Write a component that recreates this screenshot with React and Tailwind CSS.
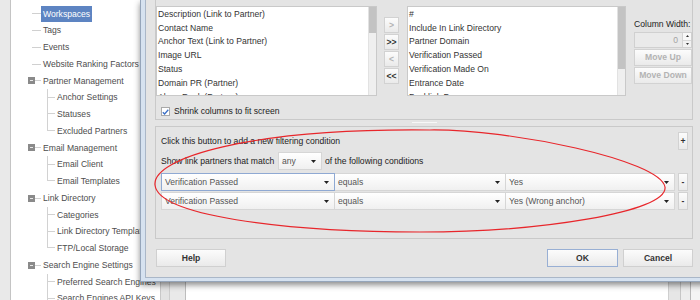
const tree = [
  { label: "Workspaces", lvl: 1, selected: true },
  { label: "Tags", lvl: 1 },
  { label: "Events", lvl: 1 },
  { label: "Website Ranking Factors", lvl: 1 },
  { label: "Partner Management", lvl: 1, group: true },
  { label: "Anchor Settings", lvl: 2 },
  { label: "Statuses", lvl: 2 },
  { label: "Excluded Partners", lvl: 2, last: true },
  { label: "Email Management", lvl: 1, group: true },
  { label: "Email Client", lvl: 2 },
  { label: "Email Templates", lvl: 2, last: true },
  { label: "Link Directory", lvl: 1, group: true },
  { label: "Categories", lvl: 2 },
  { label: "Link Directory Templates", lvl: 2 },
  { label: "FTP/Local Storage", lvl: 2, last: true },
  { label: "Search Engine Settings", lvl: 1, group: true },
  { label: "Preferred Search Engines", lvl: 2 },
  { label: "Search Engines API Keys", lvl: 2 },
];

const available = [
  "Description (Link to Partner)",
  "Contact Name",
  "Anchor Text (Link to Partner)",
  "Image URL",
  "Status",
  "Domain PR (Partner)",
  "Alexa Rank (Partner)",
];

const shown = [
  "#",
  "Include In Link Directory",
  "Partner Domain",
  "Verification Passed",
  "Verification Made On",
  "Entrance Date",
  "Backlink Page",
];

function TreeRow({ item }) {
  const label = (
    <span
      className={`h-full flex items-center px-[2px] whitespace-nowrap ${
        item.selected ? "bg-[#5d84c2] text-white" : ""
      }`}
    >
      {item.label}
    </span>
  );

  if (item.group) {
    return (
      <div className="flex items-center h-[16.76px]">
        <div className="w-[17px]" />
        <div className="w-[7px] h-[7px] bg-[#8a8a8a] flex items-center justify-center">
          <div className="w-[3px] h-px bg-[#e8e8e8]" />
        </div>
        <div className="w-[6px] h-px bg-[#d0d0d0]" />
        {label}
      </div>
    );
  }

  if (item.lvl === 2) {
    return (
      <div className="flex items-center h-[16.76px]">
        <div className="w-[36px]" />
        <div className="w-[8px] h-full flex flex-col">
          <div className="h-1/2 border-l border-b border-[#d2d2d2]" />
          <div className={`flex-1 ${item.last ? "" : "border-l border-[#d2d2d2]"}`} />
        </div>
        {label}
      </div>
    );
  }

  return (
    <div className="flex items-center h-[16.76px]">
      <div className="w-[21px]" />
      <div className="w-[9px] h-px bg-[#d0d0d0]" />
      {label}
    </div>
  );
}

function Caret() {
  return (
    <svg width="5" height="3" viewBox="0 0 5 3" className="shrink-0">
      <path d="M0 0H5L2.5 3Z" fill="#222" />
    </svg>
  );
}

function Combo({ text, className }) {
  return (
    <div
      className={`flex items-center justify-between h-[18px] pl-[3px] pr-[5px] bg-linear-to-b from-white to-[#f0f0f0] text-[#555] ${className}`}
    >
      <span className="whitespace-nowrap">{text}</span>
      <Caret />
    </div>
  );
}

function Btn({ children, className, muted }) {
  return (
    <div
      className={`flex items-center justify-center font-bold bg-linear-to-b from-[#fcfcfc] to-[#eaeaea] ${
        muted ? "text-[#b3b3b3]" : "text-[#333]"
      } ${className}`}
    >
      {children}
    </div>
  );
}

function ListBox({ items, className, thumb }) {
  return (
    <div className={`h-[90px] flex border border-[#c9c9c9] bg-white overflow-hidden ${className}`}>
      <div className="flex-1 pl-[1px] text-[#333]">
        {items.map((t) => (
          <div key={t} className="h-[13.9px] flex items-center whitespace-nowrap">
            {t}
          </div>
        ))}
      </div>
      <div className="w-[8px] bg-[#efefef] border-l border-[#e2e2e2]">
        <div className={`bg-[#c3c3c3] ${thumb}`} />
      </div>
    </div>
  );
}

export default function App() {
  return (
    <div className="relative w-[700px] h-[300px] overflow-hidden bg-[#e6e6e6] font-['Liberation_Sans',Arial,sans-serif] text-[8.6px] leading-none text-[#333]">
      {/* application behind the dialog */}
      <div className="flex h-full">
        <div className="w-[11px] bg-[#e9e9e9] border-r border-[#c4c4c4]" />
        <div className="w-[149px] bg-white pt-[5.6px] text-[#4d4d4d]">
          {tree.map((item) => (
            <TreeRow key={item.label} item={item} />
          ))}
        </div>
        <div className="w-[26px] flex bg-[#e3e3e3] border-l border-[#c8c8c8]">
          <div className="w-[9px] border-r border-[#cdcdcd]" />
          <div className="flex-1 border-r border-[#bdbdbd] bg-[#e9e9e9]" />
        </div>
        <div className="w-[482px] bg-white" />
        <div className="flex-1 flex bg-[#e6e6e6] border-l border-[#cfcfcf]">
          <div className="w-[12px] border-r border-[#c6c6c6]" />
          <div className="w-[10px] border-r border-[#b8b8b8] bg-[#ededed]" />
          <div className="flex-1 bg-[#f4f4f4]" />
        </div>
      </div>

      {/* dialog window */}
      <div className="absolute left-[140px] top-0 w-[570px] h-[282px] bg-[#d6e2f0] border-l border-b border-[#95a5ba] pl-[4px] pb-[3px] shadow-[0_3px_6px_rgba(0,0,0,0.45)]">
        <div className="h-full bg-[#e4e4e4] border-l border-b border-[#aab7c8] pl-[9px]">
          <div className="w-[538px]">
            {/* column chooser */}
            <div className="h-[120px] border-x border-b border-[#c9c9c9] pt-[6px]">
              <div className="flex items-start">
                <ListBox items={available} className="w-[221px]" thumb="h-[26px]" />
                <div className="ml-[7px] mt-[11px] w-[15px] flex flex-col gap-[1px]">
                  <Btn muted className="h-[16px] border border-[#d2d2d2]">&gt;</Btn>
                  <Btn className="h-[16px] border border-[#d2d2d2]">&gt;&gt;</Btn>
                  <Btn muted className="h-[16px] border border-[#d2d2d2]">&lt;</Btn>
                  <Btn className="h-[16px] border border-[#d2d2d2]">&lt;&lt;</Btn>
                </div>
                <ListBox items={shown} className="ml-[8px] w-[219px]" thumb="h-[62px]" />
                <div className="ml-[8px] w-[58px] flex flex-col">
                  <div className="mt-[12px] h-[13px] flex items-center whitespace-nowrap text-[#222]">
                    Column Width:
                  </div>
                  <div className="mt-[1px] h-[16px] flex border border-[#d0d0d0] bg-[#eaeaea]">
                    <div className="flex-1 flex items-center justify-end pr-[4px] text-[#a3a3a3]">0</div>
                    <div className="w-[9px] flex flex-col border-l border-[#d4d4d4]">
                      <div className="flex-1 flex items-center justify-center bg-[#f8f8f8] border-b border-[#d8d8d8]">
                        <svg width="3" height="2" viewBox="0 0 3 2">
                          <path d="M0 2H3L1.5 0Z" fill="#333" />
                        </svg>
                      </div>
                      <div className="flex-1 flex items-center justify-center bg-[#f2f2f2]">
                        <svg width="3" height="2" viewBox="0 0 3 2">
                          <path d="M0 0H3L1.5 2Z" fill="#333" />
                        </svg>
                      </div>
                    </div>
                  </div>
                  <Btn muted className="mt-[1px] h-[17px] border border-[#d2d2d2]">Move Up</Btn>
                  <Btn muted className="mt-[1px] h-[17px] border border-[#d2d2d2]">Move Down</Btn>
                </div>
              </div>
              <div className="mt-[11px] ml-[5px] flex items-center">
                <div className="w-[9px] h-[9px] bg-white border border-[#a9a9a9] flex items-center justify-center">
                  <svg width="7" height="6" viewBox="0 0 7 6">
                    <path d="M0.8 3.2 L2.6 5 L6.3 0.8" fill="none" stroke="#3b6fc6" strokeWidth="1.3" />
                  </svg>
                </div>
                <span className="ml-[4px] text-[#222]">Shrink columns to fit screen</span>
              </div>
            </div>

            {/* splitter */}
            <div className="h-[6px] pl-[257px] pt-[2px]">
              <div className="w-[25px] h-px bg-[#f7f7f7]" />
            </div>

            {/* filter conditions */}
            <div className="h-[113px] border border-[#c9c9c9] pl-[5px] pr-[4px] pt-[5px]">
              <div className="h-[18px] flex items-center justify-between">
                <span className="text-[#222]">Click this button to add a new filtering condition</span>
                <Btn className="w-[10px] h-[18px] border border-[#d2d2d2]">+</Btn>
              </div>
              <div className="mt-[2px] h-[18px] flex items-center">
                <span className="w-[117px] whitespace-nowrap text-[#222]">Show link partners that match</span>
                <Combo text="any" className="w-[44px] border border-[#d6d6d6]" />
                <span className="ml-[3px] whitespace-nowrap text-[#222]">of the following conditions</span>
              </div>
              <div className="mt-[3px] flex items-center">
                <Combo text="Verification Passed" className="w-[174px] border border-[#8fa9d3]" />
                <Combo text="equals" className="w-[171px] border-y border-r border-[#d6d6d6]" />
                <Combo text="Yes" className="w-[169px] border-y border-r border-[#d6d6d6]" />
                <Btn className="ml-[3px] w-[10px] h-[18px] border border-[#d2d2d2]">-</Btn>
              </div>
              <div className="mt-[1px] flex items-center">
                <Combo text="Verification Passed" className="w-[174px] border border-[#d6d6d6]" />
                <Combo text="equals" className="w-[171px] border-y border-r border-[#d6d6d6]" />
                <Combo text="Yes (Wrong anchor)" className="w-[169px] border-y border-r border-[#d6d6d6]" />
                <Btn className="ml-[3px] w-[10px] h-[18px] border border-[#d2d2d2]">-</Btn>
              </div>
            </div>

            {/* dialog buttons */}
            <div className="mt-[10px] h-[18px] flex pl-[1px]">
              <Btn className="w-[70px] border border-[#d0d0d0]">Help</Btn>
              <div className="flex-1" />
              <Btn className="w-[71px] border border-[#98afd4]">OK</Btn>
              <Btn className="ml-[5px] w-[70px] border border-[#d0d0d0]">Cancel</Btn>
            </div>
          </div>
        </div>
      </div>

      {/* hand drawn annotation */}
      <svg className="absolute inset-0 pointer-events-none" width="700" height="300" viewBox="0 0 700 300">
        <path
          d="M155 185 C152 158 250 128 430 130 C510 129 660 160 665 187 C668 212 540 232 420 232 C280 232 158 215 155 185Z"
          fill="none"
          stroke="#e8262b"
          strokeWidth="1.2"
        />
      </svg>
    </div>
  );
}
